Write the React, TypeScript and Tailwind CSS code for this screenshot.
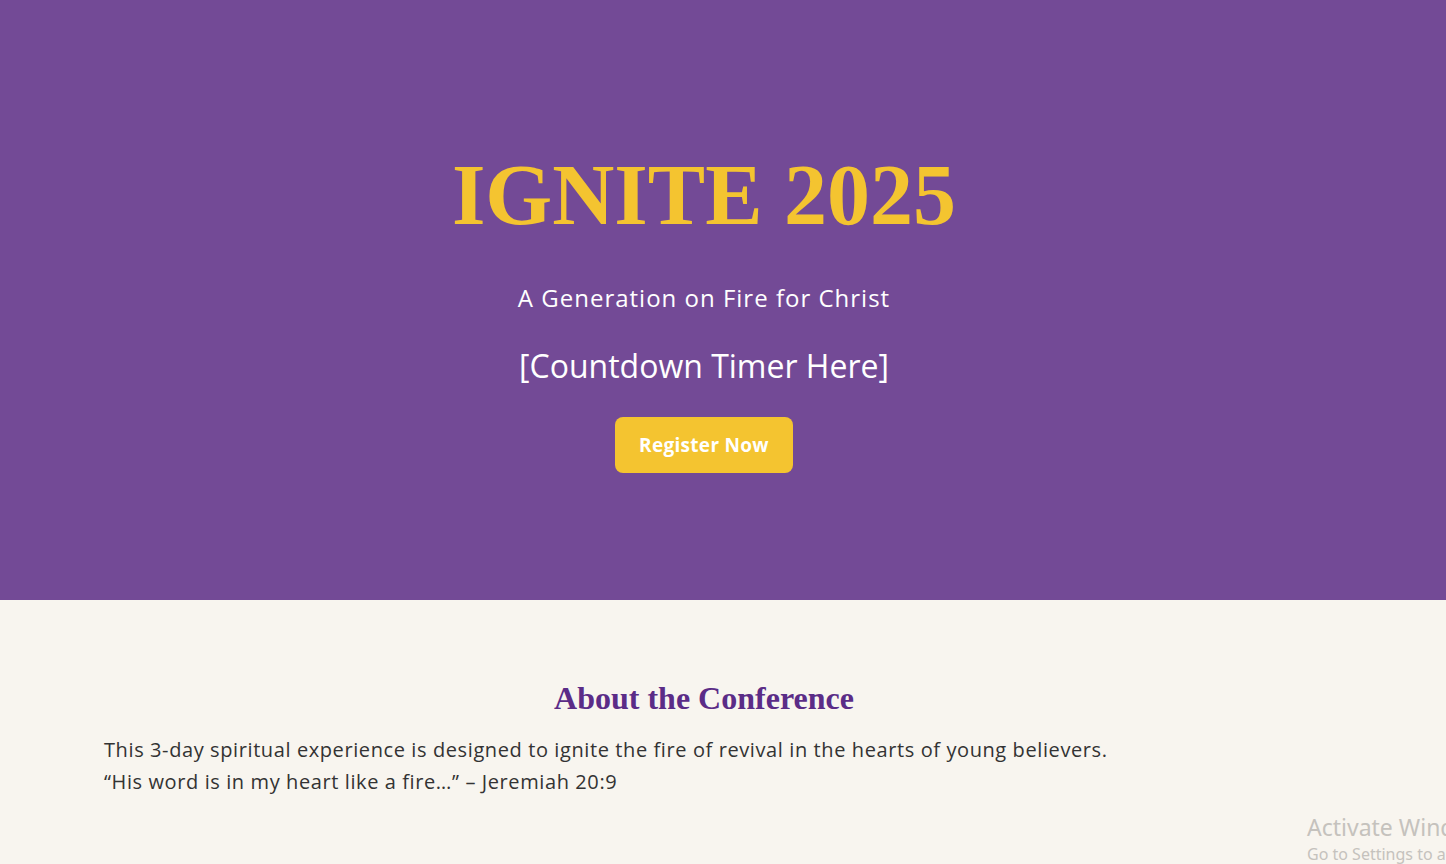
export default function App() {
  return (
    <div className="relative min-h-[864px] overflow-hidden bg-[#f8f5ef] font-['Open_Sans',sans-serif]">
      {/* Hero */}
      <section className="h-[600px] bg-[#734a96] pr-[38px]">
        <div className="flex flex-col items-center pt-[140px]">
          <h1 className="font-['Liberation_Serif',serif] text-[86px] font-bold leading-[110px] text-[#f4c430]">
            IGNITE 2025
          </h1>
          <p className="mt-[32px] text-[24px] leading-[32px] tracking-[1px] text-white">A Generation on Fire for Christ</p>
          <p className="mt-[32px] text-[32px] leading-[40px] text-white">[Countdown Timer Here]</p>
          <button className="mt-[31px] h-[56px] w-[178px] rounded-lg bg-[#f4c430] text-[19px] font-bold tracking-[0.3px] text-white">
            Register Now
          </button>
        </div>
      </section>

      {/* About */}
      <section className="pr-[38px] pt-[78px]">
        <h2 className="text-center font-['Liberation_Serif',serif] text-[32px] font-bold leading-[40px] text-[#5b2c87]">
          About the Conference
        </h2>
        <div className="mt-[16px] pl-[104px] text-[20px] leading-[32px] tracking-[0.6px] text-[#333333]">
          <p>This 3-day spiritual experience is designed to ignite the fire of revival in the hearts of young believers.</p>
          <p>“His word is in my heart like a fire…” – Jeremiah 20:9</p>
        </div>
      </section>

      {/* watermark */}
      <div className="absolute left-[1307px] top-[811px] whitespace-nowrap font-['Noto_Sans',sans-serif] text-[#c5c2bd]">
        <div className="text-[23px] leading-[32px]">Activate Windows</div>
        <div className="text-[16px] leading-[22px]">Go to Settings to activate Windows.</div>
      </div>
    </div>
  );
}
